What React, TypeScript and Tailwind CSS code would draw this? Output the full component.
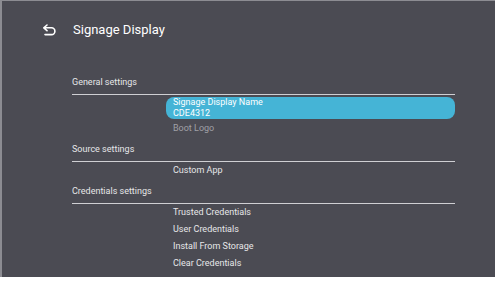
import React from "react";

interface Section {
  title: string;
  items: { label: string; sub?: string; active?: boolean; disabled?: boolean }[];
}

const sections: Section[] = [
  {
    title: "General settings",
    items: [
      { label: "Signage Display Name", sub: "CDE4312", active: true },
      { label: "Boot Logo", disabled: true },
    ],
  },
  {
    title: "Source settings",
    items: [{ label: "Custom App" }],
  },
  {
    title: "Credentials settings",
    items: [
      { label: "Trusted Credentials" },
      { label: "User Credentials" },
      { label: "Install From Storage" },
      { label: "Clear Credentials" },
    ],
  },
];

const BackIcon = () => (
  <svg width="15" height="12" viewBox="0 0 15 12" fill="none">
    <path
      d="M5 1 L1.8 3.8 L5 6.6 M2 3.8 H9.5 A3.4 3.4 0 0 1 9.5 10.6 H3"
      stroke="white"
      strokeWidth="1.6"
      strokeLinecap="round"
      strokeLinejoin="round"
    />
  </svg>
);

export default function App() {
  return (
    <div className="w-[500px] h-[282px] bg-white overflow-hidden">
      <div
        className="w-[495px] h-[277px] bg-[#4b4b53] border-t border-l-2 border-[#8c8c92] text-[#e6e6e8]"
        style={{ fontFamily: "Roboto, 'Noto Sans', sans-serif" }}>
        {/* header */}
        <div className="flex items-center h-[28px] mt-[15px] pl-[40px]">
          <BackIcon />
          <span className="ml-[16px] text-[13px] text-white">Signage Display</span>
        </div>

        <div className="mt-[26.5px] pl-[70px] pr-[40px]">
          {sections.map((s) => (
            <div key={s.title}>
              <div className="h-[23px] flex items-center text-[9px] leading-none">
                {s.title}
              </div>
              <div className="h-px bg-[#cfcfd3]" />
              <div className="pt-px">
                {s.items.map((it) =>
                  it.active ? (
                    <div
                      key={it.label}
                      className="ml-[94px] mt-px mb-[2px] h-[22px] rounded-[8px] bg-[#45b4d6] pl-[7px] flex flex-col justify-center text-white text-[9px] leading-[11px]">
                      <span>{it.label}</span>
                      <span>{it.sub}</span>
                    </div>
                  ) : (
                    <div
                      key={it.label}
                      className={`ml-[101px] h-[17px] flex items-center text-[9px] ${
                        it.disabled ? "text-[#a0a0a6]" : "text-[#e6e6e8]"
                      }`}>
                      {it.label}
                    </div>
                  )
                )}
              </div>
            </div>
          ))}
        </div>
      </div>
    </div>
  );
}
